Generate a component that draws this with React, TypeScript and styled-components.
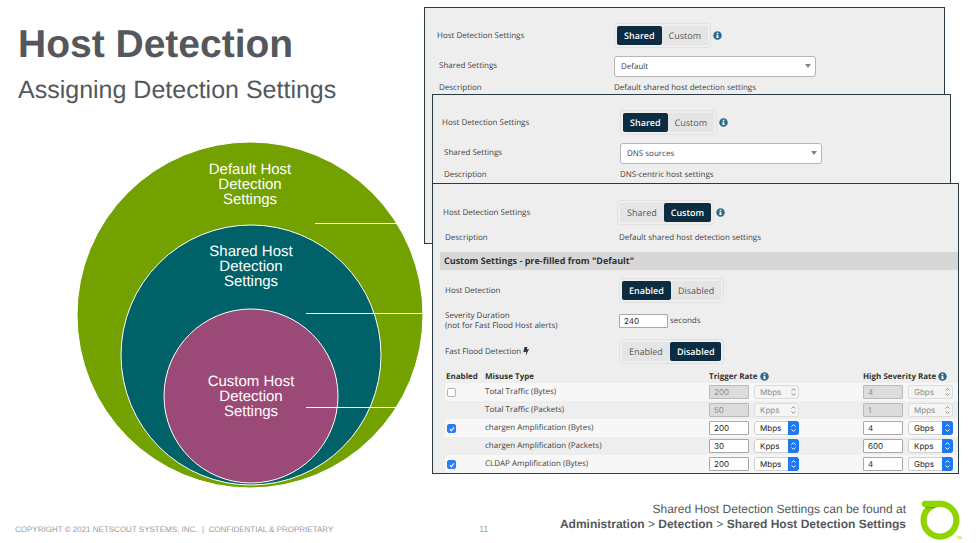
import React, { useState } from "react";
import styled, { createGlobalStyle, css } from "styled-components";

const ink = "#54585d";
const navy = "#0b2c41";
const frame = "#2b3a42";
const ui = `"Open Sans", "Noto Sans", sans-serif`;
const fieldFont = `Inter, Roboto, sans-serif`;

const GlobalStyle = createGlobalStyle`
  * { box-sizing: border-box; }
  html, body, #root { height: 100%; }
  body {
    margin: 0;
    background: #fff;
    color: ${ink};
    font-family: "Liberation Sans", Arial, sans-serif;
    text-rendering: geometricPrecision;
  }
  button, input, select { margin: 0; font: inherit; color: inherit; text-rendering: inherit; }
`;

const Slide = styled.div`
  min-height: 100%;
  display: flex;
  flex-direction: column;
  justify-content: space-between;
`;

const Main = styled.main`
  display: grid;
  grid-template-columns: minmax(0, 424fr) minmax(0, 552fr);
`;

const Intro = styled.section`
  display: flex;
  flex-direction: column;
  padding-top: 21px;
`;

const Title = styled.h1`
  margin: 0;
  padding-left: 18px;
  font-size: 39px;
  line-height: 48px;
`;

const Subtitle = styled.h2`
  margin: 0;
  padding: 6px 0 0 18px;
  font-size: 25px;
  line-height: 30px;
  font-weight: 400;
`;

const Diagram = styled.svg`
  display: block;
  width: 100%;
  margin-top: 36px;
`;

const Stack = styled.section`
  display: grid;
  align-items: start;
  font-family: ${ui};
  font-size: 8px;
  line-height: 10px;
  color: #3f4244;
`;

const Panel = styled.div<{ $margin: string; $padding: string }>`
  grid-area: 1 / 1;
  margin: ${(p) => p.$margin};
  padding: ${(p) => p.$padding};
  background: #eee;
  border: 1px solid ${frame};
`;

const FieldRow = styled.div<{ $height: number; $label?: number; $inset?: boolean }>`
  display: grid;
  grid-template-columns: ${(p) => p.$label ?? 176}px minmax(0, 1fr);
  align-items: center;
  min-height: ${(p) => p.$height}px;
  > :first-child { padding-left: ${(p) => (p.$inset ? 2 : 0)}px; }
`;

const Control = styled.div<{ $gap?: number }>`
  display: flex;
  align-items: center;
  gap: ${(p) => p.$gap ?? 2}px;
`;

const Segments = styled.div`
  display: flex;
  padding: 2px;
  border: 1px solid #e2e2e2;
  border-radius: 3px;
`;

const Segment = styled.button<{ $on: boolean }>`
  height: 19px;
  padding: 0 7px;
  border: 0;
  border-radius: 2px;
  background: #e5e5e5;
  font-size: 9px;
  line-height: 18px;
  color: #55585a;
  ${(p) =>
    p.$on &&
    css`
      background: ${navy};
      color: #fff;
      font-weight: 600;
    `}
`;

const DropWrap = styled.div`
  display: grid;
  align-items: center;
  width: 202px;
  > * { grid-area: 1 / 1; }
  > svg { justify-self: end; margin-right: 5px; pointer-events: none; }
`;

const Drop = styled.select`
  appearance: none;
  width: 100%;
  height: 21px;
  padding: 1px 6px 0;
  border: 1px solid #b5b5b5;
  border-radius: 3px;
  background: #fff;
`;

const Band = styled.h3`
  margin: 2px 0 8px -3px;
  padding: 0 4px;
  background: #d7d7d7;
  font-size: 9px;
  line-height: 18px;
  font-weight: 700;
  color: #333;
`;

const NumberBox = styled.input<{ $width: number }>`
  width: ${(p) => p.$width}px;
  height: 14px;
  padding: 0 4px;
  border: 1px solid #a8a8a8;
  border-radius: 1px;
  background: #fff;
  font-family: ${fieldFont};
  font-size: 8px;
  color: #222;
  &:disabled { background: #dcdcdc; border-color: #b9b9b9; color: #8b8b8b; }
`;

const TableArea = styled.div`
  padding: 7px 0 0 2px;
`;

const Table = styled.table`
  width: 100%;
  table-layout: fixed;
  border-collapse: collapse;
  th { padding: 0 0 0 1px; height: 12px; text-align: left; font-weight: 700; color: #333; white-space: nowrap; }
  td { padding: 0 0 0 1px; height: 18px; }
  tbody tr:nth-child(odd) { background: #f7f7f7; }
  th svg { vertical-align: -2px; }
`;

const Col = styled.col<{ $width?: number }>`
  width: ${(p) => (p.$width ? `${p.$width}px` : "auto")};
`;

const Check = styled.input`
  appearance: none;
  display: block;
  width: 9px;
  height: 9px;
  margin-left: 1px;
  border: 1px solid #b4b4b4;
  border-radius: 2px;
  background: #fff;
  &:checked {
    border-color: #2f7cf0;
    background: #2f7cf0 url("data:image/svg+xml,%3Csvg xmlns='http://www.w3.org/2000/svg' viewBox='0 0 8 8'%3E%3Cpath d='M2 4.2 3.4 5.8 6 2.2' fill='none' stroke='white' stroke-width='1.1'/%3E%3C/svg%3E") center / 8px 8px;
  }
`;

const UnitWrap = styled.span`
  display: grid;
  align-items: center;
  width: 45px;
  > * { grid-area: 1 / 1; }
  > svg { justify-self: end; pointer-events: none; }
`;

const Unit = styled.select`
  appearance: none;
  width: 100%;
  height: 14px;
  padding: 0 0 0 5px;
  border: 1px solid #cfcfcf;
  border-radius: 3px;
  background: #fff;
  font-family: ${fieldFont};
  font-size: 8px;
  color: #222;
  &:disabled { opacity: 1; background: #f5f5f5; border-color: #dcdcdc; color: #8b8b8b; }
`;

const Footer = styled.footer`
  display: grid;
  grid-template-columns: minmax(0, 479fr) minmax(0, 427fr) 70px;
  align-items: center;
  padding-bottom: 2px;
`;

const Copyright = styled.small`
  padding: 20px 0 0 15px;
  font-size: 8px;
  line-height: 12px;
  color: #999b9e;
  white-space: pre;
`;

const Closing = styled.div`
  display: grid;
  grid-template-columns: auto 1fr;
  align-items: center;
`;

const PageNumber = styled.span`
  padding-top: 18px;
  font-size: 9px;
  line-height: 12px;
  color: #a3a5a8;
`;

const Note = styled.p`
  margin: 0;
  padding-bottom: 6px;
  text-align: right;
  font-size: 12px;
  line-height: 15px;
  white-space: nowrap;
`;

const Logo = styled.svg`
  display: block;
  justify-self: start;
  margin-left: 13px;
`;

const InfoIcon = () => (
  <svg width="9" height="9" viewBox="0 0 18 18" aria-hidden="true">
    <circle cx="9" cy="9" r="8.5" fill="#2c6a8c" />
    <path d="M7.4 3.4h3.2v2.6H7.4zM6.4 7.4h4.2v5h1.2v1.8H6.2v-1.8h1.2V9.2h-1z" fill="#fff" />
  </svg>
);

const Bolt = styled.svg`
  vertical-align: -2px;
`;

const BoltIcon = () => (
  <Bolt width="6" height="9" viewBox="0 0 12 18" aria-hidden="true">
    <path d="M3 0h6L7.4 5 12 4.2 5.4 18l1.2-8.6L.6 10.6z" fill="#333" />
  </Bolt>
);

const Stepper = ({ muted }: { muted: boolean }) => (
  <svg width="11" height="14" viewBox="0 0 11 14" aria-hidden="true">
    {!muted && <path d="M0 0h8a3 3 0 0 1 3 3v8a3 3 0 0 1-3 3H0z" fill="#1d78f2" />}
    <path
      d="M3.5 5.6 5.5 3.6 7.5 5.6M3.5 8.4l2 2 2-2"
      fill="none"
      stroke={muted ? "#8f8f8f" : "#fff"}
      strokeWidth="1"
    />
  </svg>
);

function Toggle({ label, options, initial }: { label: string; options: string[]; initial: string }) {
  const [value, setValue] = useState(initial);
  return (
    <Segments role="group" aria-label={label}>
      {options.map((o) => (
        <Segment key={o} type="button" $on={o === value} aria-pressed={o === value} onClick={() => setValue(o)}>
          {o}
        </Segment>
      ))}
    </Segments>
  );
}

function ModeRow({ initial, height, label }: { initial: string; height: number; label: number }) {
  return (
    <FieldRow $height={height} $label={label}>
      <span>Host Detection Settings</span>
      <Control>
        <Toggle label="Host Detection Settings" options={["Shared", "Custom"]} initial={initial} />
        <InfoIcon />
      </Control>
    </FieldRow>
  );
}

type SharedProps = { id: string; choice: string; description: string; label: number };

function SharedFields({ id, choice, description, label }: SharedProps) {
  return (
    <>
      <ModeRow initial="Shared" height={27} label={label} />
      <FieldRow $height={34} $label={label} $inset>
        <label htmlFor={id}>Shared Settings</label>
        <DropWrap>
          <Drop id={id} defaultValue={choice}>
            <option>Default</option>
            <option>DNS sources</option>
          </Drop>
          <svg width="6" height="4" viewBox="0 0 6 4" aria-hidden="true">
            <path d="M0 0h6L3 4z" fill="#858585" />
          </svg>
        </DropWrap>
      </FieldRow>
      <FieldRow $height={10} $label={label} $inset>
        <span>Description</span>
        <span>{description}</span>
      </FieldRow>
    </>
  );
}

type Rate = [string, string];
const misuse: { name: string; checked?: boolean; off?: boolean; trigger: Rate; high: Rate }[] = [
  { name: "Total Traffic (Bytes)", checked: false, off: true, trigger: ["200", "Mbps"], high: ["4", "Gbps"] },
  { name: "Total Traffic (Packets)", off: true, trigger: ["50", "Kpps"], high: ["1", "Mpps"] },
  { name: "chargen Amplification (Bytes)", checked: true, trigger: ["200", "Mbps"], high: ["4", "Gbps"] },
  { name: "chargen Amplification (Packets)", trigger: ["30", "Kpps"], high: ["600", "Kpps"] },
  { name: "CLDAP Amplification (Bytes)", checked: true, trigger: ["200", "Mbps"], high: ["4", "Gbps"] },
];

function RateField({ label, rate, off }: { label: string; rate: Rate; off: boolean }) {
  const units = rate[1].endsWith("bps") ? ["Mbps", "Gbps"] : ["Kpps", "Mpps"];
  return (
    <Control $gap={5}>
      <NumberBox $width={40} aria-label={label} defaultValue={rate[0]} disabled={off} />
      <UnitWrap>
        <Unit aria-label={`${label} unit`} defaultValue={rate[1]} disabled={off}>
          {units.map((u) => (
            <option key={u}>{u}</option>
          ))}
        </Unit>
        <Stepper muted={off} />
      </UnitWrap>
    </Control>
  );
}

const circles = [
  { cx: 250, cy: 174, r: 173, fill: "#72a100", top: 33, text: "Default Host" },
  { cx: 251, cy: 214, r: 130, fill: "#006169", top: 115, text: "Shared Host" },
  { cx: 251, cy: 255, r: 87, fill: "#9b4977", top: 245, text: "Custom Host" },
];

const leaders = [
  { x: 315, y: 82.5 },
  { x: 306, y: 172.5 },
  { x: 306, y: 266.5 },
];

export default function App() {
  return (
    <>
      <GlobalStyle />
      <Slide>
        <Main>
          <Intro>
            <Title>Host Detection</Title>
            <Subtitle>Assigning Detection Settings</Subtitle>
            <Diagram viewBox="0 0 424 348" role="img" aria-label="Nested host detection settings">
              {circles.map((c) => (
                <circle key={c.text} cx={c.cx} cy={c.cy} r={c.r} fill={c.fill} stroke="#fff" strokeWidth="1" />
              ))}
              {leaders.map((l) => (
                <path key={l.y} d={`M${l.x} ${l.y}H424`} stroke="#fff" strokeWidth="1" />
              ))}
              {circles.map((c) => (
                <text key={c.text} textAnchor="middle" fontSize="15" fill="#fff">
                  <tspan x={c.cx} y={c.top}>{c.text}</tspan>
                  <tspan x={c.cx} dy="15">Detection</tspan>
                  <tspan x={c.cx} dy="15">Settings</tspan>
                </text>
              ))}
            </Diagram>
          </Intro>

          <Stack>
            <Panel $margin="7px 31px 0 0" $padding="14px 0 150px 12px">
              <SharedFields
                id="shared-a"
                choice="Default"
                description="Default shared host detection settings"
                label={177}
              />
            </Panel>
            <Panel $margin="94px 25px 0 8px" $padding="14px 0 174px 9px">
              <SharedFields id="shared-b" choice="DNS sources" description="DNS-centric host settings" label={178} />
            </Panel>
            <Panel $margin="183px 17px 0 8px" $padding="16px 0 0 10px">
              <ModeRow initial="Custom" height={25} label={174} />
              <FieldRow $height={25} $inset>
                <span>Description</span>
                <span>Default shared host detection settings</span>
              </FieldRow>
              <Band>Custom Settings - pre-filled from "Default"</Band>
              <FieldRow $height={25} $inset>
                <span>Host Detection</span>
                <Control>
                  <Toggle label="Host Detection" options={["Enabled", "Disabled"]} initial="Enabled" />
                </Control>
              </FieldRow>
              <FieldRow $height={36} $inset>
                <label htmlFor="severity">
                  Severity Duration
                  <br />
                  (not for Fast Flood Host alerts)
                </label>
                <Control>
                  <NumberBox id="severity" $width={49} defaultValue="240" />
                  seconds
                </Control>
              </FieldRow>
              <FieldRow $height={25} $inset>
                <span>
                  Fast Flood Detection <BoltIcon />
                </span>
                <Control>
                  <Toggle label="Fast Flood Detection" options={["Enabled", "Disabled"]} initial="Disabled" />
                </Control>
              </FieldRow>
              <TableArea>
                <Table>
                  <colgroup>
                    <Col $width={39} />
                    <Col />
                    <Col $width={154} />
                    <Col $width={96} />
                  </colgroup>
                  <thead>
                    <tr>
                      <th scope="col">Enabled</th>
                      <th scope="col">Misuse Type</th>
                      <th scope="col">Trigger Rate <InfoIcon /></th>
                      <th scope="col">High Severity Rate <InfoIcon /></th>
                    </tr>
                  </thead>
                  <tbody>
                    {misuse.map((m) => (
                      <tr key={m.name}>
                        <td>
                          {m.checked !== undefined && (
                            <Check type="checkbox" aria-label={`Enable ${m.name}`} defaultChecked={m.checked} />
                          )}
                        </td>
                        <td>{m.name}</td>
                        <td><RateField label={`${m.name} trigger rate`} rate={m.trigger} off={!!m.off} /></td>
                        <td><RateField label={`${m.name} high severity rate`} rate={m.high} off={!!m.off} /></td>
                      </tr>
                    ))}
                  </tbody>
                </Table>
              </TableArea>
            </Panel>
          </Stack>
        </Main>

        <Footer>
          <Copyright>{"COPYRIGHT © 2021 NETSCOUT SYSTEMS, INC.  |  CONFIDENTIAL & PROPRIETARY"}</Copyright>
          <Closing>
            <PageNumber>11</PageNumber>
            <Note>
              Shared Host Detection Settings can be found at
              <br />
              <b>Administration</b> &gt; <b>Detection</b> &gt; <b>Shared Host Detection Settings</b>
            </Note>
          </Closing>
          <Logo width="46" height="42" viewBox="0 0 46 42" role="img" aria-label="Netscout">
            <circle cx="21" cy="21.2" r="16.4" fill="none" stroke="#8fd400" strokeWidth="6.2" />
            <path d="M6 7.4H18.5L14.5 9.6 7 9.2z" fill="#6aa80c" />
            <path d="M6 4.9H21" fill="none" stroke="#8fd400" strokeWidth="6.2" strokeLinecap="round" />
            <text x="37" y="40" fontSize="4" fill="#8fd400">TM</text>
          </Logo>
        </Footer>
      </Slide>
    </>
  );
}
